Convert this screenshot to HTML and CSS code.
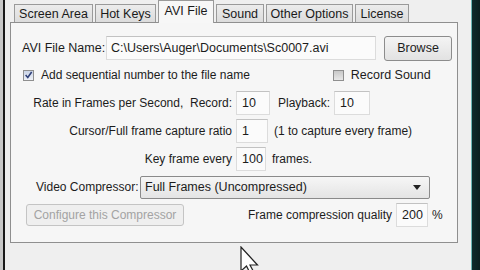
FILE: index.html
```html
<!DOCTYPE html>
<html>
<head>
<meta charset="utf-8">
<link rel="stylesheet" href="styles.css">
</head>
<body>
<div class="screen">
  <div class="edge-left"></div>
  <div class="bar-left"></div>
  <div class="main">
    <div class="tabs">
      <div class="tab t1">Screen Area</div>
      <div class="tab t2">Hot Keys</div>
      <div class="tab active t3">AVI File</div>
      <div class="tab t4">Sound</div>
      <div class="tab t5">Other Options</div>
      <div class="tab t6">License</div>
    </div>
    <div class="panel">
      <div class="row r1">
        <span class="lbl name-lbl">AVI File Name:</span>
        <div class="field file-field">C:\Users\Auger\Documents\Sc0007.avi</div>
        <div class="btn browse">Browse</div>
      </div>
      <div class="row r2">
        <span class="check checked"><svg width="10" height="10" viewBox="0 0 10 10"><path d="M1.8 5 L4.2 7.8 L8.5 1.6" fill="none" stroke="#2e3f78" stroke-width="1.7"/></svg></span>
        <span class="lbl seq">Add sequential number to the file name</span>
        <span class="check unchecked"></span>
        <span class="lbl rs">Record Sound</span>
      </div>
      <div class="row r3">
        <span class="lbl rlbl">Rate in Frames per Second,&nbsp; Record:</span>
        <div class="field small w34">10</div>
        <span class="lbl play">Playback:</span>
        <div class="field small w36">10</div>
      </div>
      <div class="row r4">
        <span class="lbl rlbl">Cursor/Full frame capture ratio</span>
        <div class="field small w32">1</div>
        <span class="lbl after">(1 to capture every frame)</span>
      </div>
      <div class="row r5">
        <span class="lbl rlbl">Key frame every</span>
        <div class="field small w30">100</div>
        <span class="lbl after">frames.</span>
      </div>
      <div class="row r6">
        <span class="lbl vc">Video Compressor:</span>
        <div class="select">
          <span>Full Frames (Uncompressed)</span>
          <svg class="arrow" width="8" height="5" viewBox="0 0 8 5"><path d="M0 0 H8 L4 5 Z" fill="#222"/></svg>
        </div>
      </div>
      <div class="row r7">
        <div class="btn disabled">Configure this Compressor</div>
        <span class="lbl qlbl">Frame compression quality</span>
        <div class="field small w32 q">200</div>
        <span class="lbl pct">%</span>
      </div>
    </div>
    <div class="below"></div>
  </div>
  <div class="bar-right"></div>
</div>
<svg class="cursor" width="22" height="28" viewBox="0 0 22 28"><path d="M1 1 L1 25 L6.5 20 L10.5 28 L14 26.5 L10 19 L17.5 19 Z" fill="#fff" stroke="#222" stroke-width="1.2"/></svg>
</body>
</html>
```
FILE: styles.css
```css
html, body {
  margin: 0;
  padding: 0;
}
body {
  width: 480px;
  height: 270px;
  overflow: hidden;
  position: relative;
  background: #eeeeee;
  font-family: "Liberation Sans", Arial, sans-serif;
  font-size: 12px;
  color: #1c1c1c;
}
.screen {
  display: flex;
  width: 480px;
  height: 270px;
}
.edge-left {
  width: 3px;
  background: #c9c9c9;
}
.bar-left {
  width: 2px;
  background: #1a1a1a;
}
.main {
  flex: 1;
  display: flex;
  flex-direction: column;
  background: #efefef;
}
.bar-right {
  width: 9px;
  background: linear-gradient(90deg, #6ab5b5 0, #6ab5b5 1px, #0e2b2c 1px, #0a1f20 100%);
}
.tabs {
  display: flex;
  height: 22px;
  align-items: flex-end;
  padding-left: 9px;
  gap: 2px;
  position: relative;
  z-index: 2;
}
.tab {
  height: 18px;
  line-height: 18px;
  box-sizing: border-box;
  border: 1px solid #9a9a9a;
  border-bottom: none;
  background: linear-gradient(#ececec, #dcdcdc);
  text-align: center;
  font-size: 12.5px;
  color: #1a1a1a;
}
.tab.active {
  line-height: 20px;
  background: #f7f7f7;
  margin-bottom: -1px;
  height: 23px;
}
.t1 { width: 79px; }
.t2 { width: 61px; }
.t3 { width: 56px; }
.t4 { width: 48px; }
.t5 { width: 87px; }
.t6 { width: 54px; }
.panel {
  margin-left: 5px;
  width: 448px;
  height: 221px;
  box-sizing: border-box;
  border: 1px solid #8f8f8f;
  background: #f6f6f6;
  display: flex;
  flex-direction: column;
  padding-top: 12px;
}
.below {
  flex: 1;
}
.row {
  display: flex;
  align-items: center;
  white-space: nowrap;
}
.lbl {
  font-size: 12px;
}
.r1 { height: 26px; padding-left: 11px; }
.name-lbl { width: 84px; font-size: 12.5px; }
.field {
  box-sizing: border-box;
  height: 24px;
  line-height: 22px;
  background: #fbfbfb;
  border: 1px solid #dcdcdc;
  border-top-color: #c2c2c2;
  padding-left: 4px;
  font-size: 12.5px;
}
.file-field { width: 270px; }
.btn {
  box-sizing: border-box;
  border: 1px solid #8c8c8c;
  border-radius: 3px;
  background: linear-gradient(#f4f4f4, #e2e2e2);
  text-align: center;
  font-size: 12.5px;
}
.browse {
  margin-left: 8px;
  width: 68px;
  height: 25px;
  line-height: 23px;
}
.r2 { height: 16px; margin-top: 6px; padding-left: 12px; }
.check {
  width: 11px;
  height: 11px;
  box-sizing: border-box;
  border: 1px solid #8f8f8f;
  display: flex;
  align-items: center;
  justify-content: center;
}
.check.checked { background: linear-gradient(#c9d3e6, #eef1f7); }
.check.unchecked { margin-left: 83px; background: linear-gradient(#c8c8c8, #e8e8e8); }
.seq { margin-left: 7px; }
.rs { margin-left: 7px; font-size: 12.5px; }
.r3 { height: 24px; margin-top: 8px; }
.r4 { height: 24px; margin-top: 4px; }
.r5 { height: 24px; margin-top: 4px; }
.rlbl {
  width: 221px;
  text-align: right;
  padding-right: 4px;
}
.small { padding-left: 5px; }
.w34 { width: 34px; }
.w36 { width: 36px; }
.w32 { width: 32px; }
.w30 { width: 30px; }
.play { margin-left: 8px; width: 56px; }
.after { margin-left: 6px; }
.r6 { height: 24px; margin-top: 4px; padding-left: 25px; }
.vc { width: 104px; }
.select {
  box-sizing: border-box;
  width: 290px;
  height: 23px;
  border: 1px solid #8a8a8a;
  border-radius: 2px;
  background: linear-gradient(#f6f6f6, #e4e4e4);
  display: flex;
  align-items: center;
  justify-content: space-between;
  padding: 0 8px 0 4px;
  font-size: 12.5px;
}
.r7 { height: 24px; margin-top: 4px; padding-left: 15px; }
.btn.disabled {
  width: 158px;
  height: 22px;
  line-height: 20px;
  color: #a3a3a3;
  border-color: #c4c4c4;
  background: #efefef;
  font-size: 12px;
}
.qlbl { margin-left: 64px; width: 144px; text-align: right; padding-right: 4px; }
.q { width: 32px; }
.pct { margin-left: 4px; }
.cursor {
  position: absolute;
  left: 240px;
  top: 246px;
}
```
